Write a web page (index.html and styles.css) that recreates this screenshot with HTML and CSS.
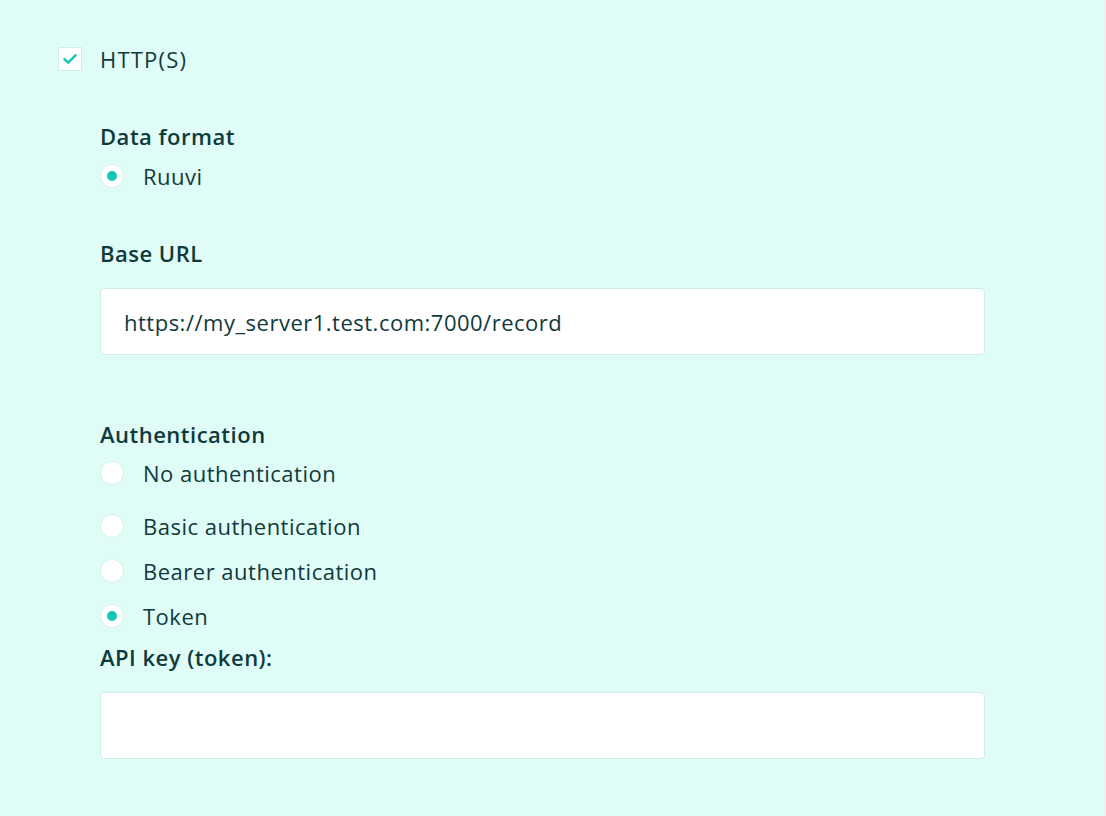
FILE: index.html
```html
<!DOCTYPE html>
<html lang="en">
<head>
<meta charset="utf-8">
<title>HTTP(S) settings</title>
<link rel="stylesheet" href="styles.css">
</head>
<body>
<div class="page">
  <label class="check-row">
    <span class="checkbox">
      <svg width="16" height="16" viewBox="0 0 16 16"><path d="M2.5 8.2 L6.2 11.6 L13.5 4.4" fill="none" stroke="#19c7b2" stroke-width="2.6" stroke-linecap="round" stroke-linejoin="round"/></svg>
    </span>
    <span class="check-label">HTTP(S)</span>
  </label>

  <div class="section">
    <div class="heading h-data">Data format</div>
    <div class="radio-row r-ruuvi"><span class="radio checked"></span><span class="radio-label">Ruuvi</span></div>

    <div class="heading h-url">Base URL</div>
    <div class="input i-url">https://my_server1.test.com:7000/record</div>

    <div class="heading h-auth">Authentication</div>
    <div class="radio-row r-no"><span class="radio"></span><span class="radio-label">No authentication</span></div>
    <div class="radio-row r-basic"><span class="radio"></span><span class="radio-label">Basic authentication</span></div>
    <div class="radio-row r-bearer"><span class="radio"></span><span class="radio-label">Bearer authentication</span></div>
    <div class="radio-row r-token"><span class="radio checked"></span><span class="radio-label">Token</span></div>

    <div class="heading h-api">API key (token):</div>
    <div class="input i-api"></div>
  </div>
</div>
</body>
</html>
```
FILE: styles.css
```css
html, body {
  margin: 0;
  padding: 0;
}
body {
  background: #e0fcf7;
  font-family: "Open Sans", "Noto Sans", sans-serif;
  color: #0f3a3c;
  font-size: 22px;
  letter-spacing: 0.5px;
  line-height: 24px;
  height: 816px;
  box-sizing: border-box;
  border-right: 2px solid #efefef;
  overflow: hidden;
}
.page {
  padding: 47px 0 0 58px;
}
.check-row {
  display: flex;
  align-items: center;
  gap: 18px;
  height: 24px;
}
.check-label {
  letter-spacing: 1.2px;
}
.checkbox {
  width: 22px;
  height: 22px;
  background: #fff;
  border: 1px solid #cdeee8;
  display: flex;
  align-items: center;
  justify-content: center;
}
.section {
  margin-left: 42px;
  width: 885px;
}
.heading {
  font-weight: 600;
  height: 24px;
}
.h-data { margin-top: 53px; }
.h-url { margin-top: 53px; }
.h-auth { margin-top: 67px; }
.h-api { margin-top: 17px; }
.radio-row {
  display: flex;
  align-items: center;
  gap: 20px;
  height: 24px;
}
.r-ruuvi { margin-top: 16px; }
.r-no { margin-top: 15px; }
.r-basic { margin-top: 29px; }
.r-bearer { margin-top: 21px; }
.r-token { margin-top: 21px; }
.radio {
  width: 22px;
  height: 22px;
  border-radius: 50%;
  background: #fff;
  box-shadow: 0 0 0 1px #d3f2ec;
  display: flex;
  align-items: center;
  justify-content: center;
  margin-left: 1px;
}
.radio.checked::after {
  content: "";
  width: 10px;
  height: 10px;
  border-radius: 50%;
  background: #10c9b5;
}
.input {
  margin-top: 23px;
  height: 67px;
  box-sizing: border-box;
  background: #fff;
  border: 1px solid #cdeee8;
  border-radius: 4px;
  padding: 0 23px;
  display: flex;
  align-items: center;
}
```
